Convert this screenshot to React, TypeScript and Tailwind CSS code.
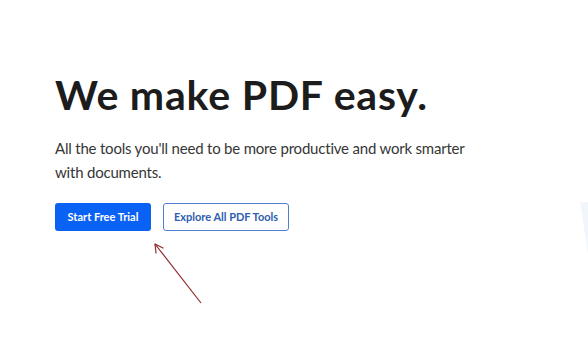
export default function App() {
  return (
    <div className="relative w-[588px] h-[349px] overflow-hidden bg-white" style={{ fontFamily: "Lato, 'Open Sans', sans-serif" }}>
      <div className="absolute right-0 top-[202px] w-[13px] h-[52px] bg-[#f1f5fc] [clip-path:polygon(40%_0,100%_0,100%_100%)]" />
      <div className="flex flex-col pl-[55px] pt-[71px]">
        <h1 className="text-[41px] leading-[48px] font-bold text-[#1c1c1c] tracking-[0.8px]">We make PDF easy.</h1>
        <p className="mt-[17px] w-[440px] text-[15px] leading-[24px] text-[#363636] tracking-[-0.2px]">
          All the tools you'll need to be more productive and work smarter with documents.
        </p>
        <div className="mt-[19px] flex gap-[12px]">
          <button className="w-[96px] h-[28px] rounded-[3px] bg-[#0a62f5] text-white text-[11px] font-bold">
            Start Free Trial
          </button>
          <button className="w-[126px] h-[28px] rounded-[3px] border border-[#4f7fd1] bg-white text-[#2f5db0] text-[11px] font-bold">
            Explore All PDF Tools
          </button>
        </div>
      </div>
      <svg className="absolute left-0 top-0" width="588" height="349" viewBox="0 0 588 349" fill="none">
        <line x1="201" y1="303" x2="155" y2="244" stroke="#8e2a2a" strokeWidth="1.2" />
        <path d="M155 244 L156 253 M155 244 L163 248" stroke="#8e2a2a" strokeWidth="1.2" strokeLinecap="round" />
      </svg>
    </div>
  );
}
